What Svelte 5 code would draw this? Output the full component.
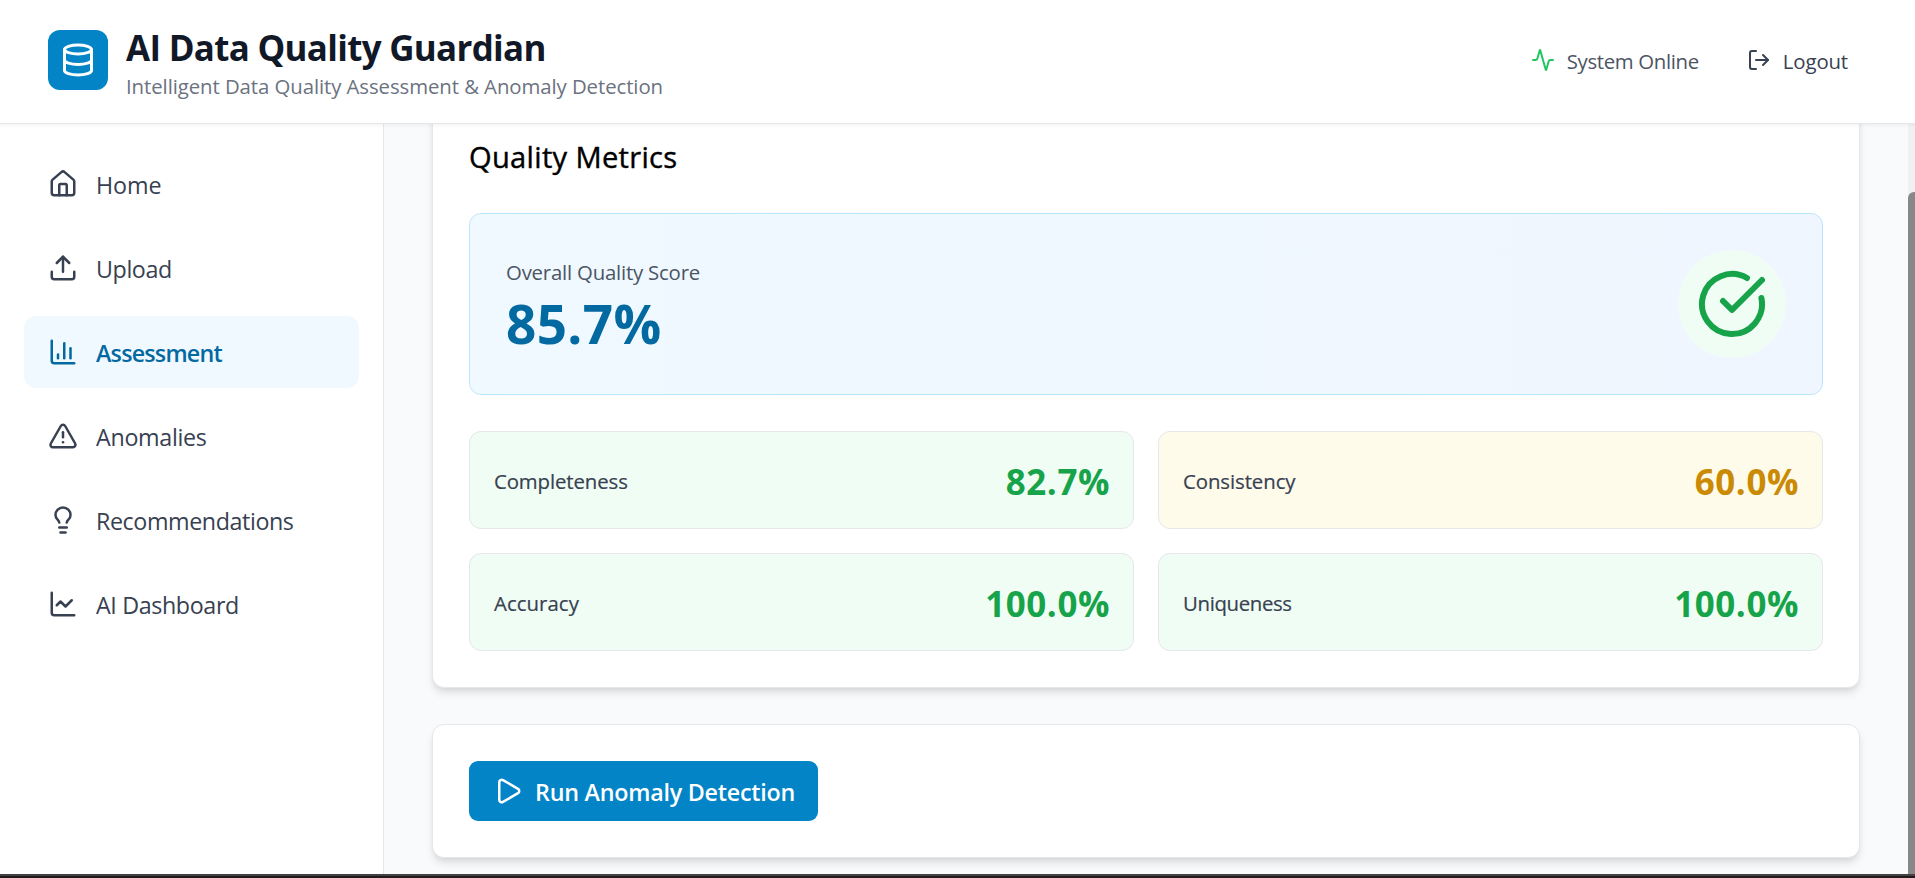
<script>
  const icons = {
    database: '<ellipse cx="12" cy="5" rx="9" ry="3"/><path d="M3 5V19A9 3 0 0 0 21 19V5"/><path d="M3 12A9 3 0 0 0 21 12"/>',
    activity: '<path d="M22 12h-2.48a2 2 0 0 0-1.93 1.46l-2.35 8.36a.25.25 0 0 1-.48 0L9.24 2.18a.25.25 0 0 0-.48 0l-2.35 8.36A2 2 0 0 1 4.49 12H2"/>',
    logout: '<path d="m16 17 5-5-5-5"/><path d="M21 12H9"/><path d="M9 21H5a2 2 0 0 1-2-2V5a2 2 0 0 1 2-2h4"/>',
    home: '<path d="M15 21v-8a1 1 0 0 0-1-1h-4a1 1 0 0 0-1 1v8"/><path d="M3 10a2 2 0 0 1 .709-1.528l7-5.999a2 2 0 0 1 2.582 0l7 5.999A2 2 0 0 1 21 10v9a2 2 0 0 1-2 2H5a2 2 0 0 1-2-2z"/>',
    upload: '<path d="M12 3v12"/><path d="m17 8-5-5-5 5"/><path d="M21 15v4a2 2 0 0 1-2 2H5a2 2 0 0 1-2-2v-4"/>',
    bars: '<path d="M3 3v16a2 2 0 0 0 2 2h16"/><path d="M18 17V9"/><path d="M13 17V5"/><path d="M8 17v-3"/>',
    alert: '<path d="m21.73 18-8-14a2 2 0 0 0-3.48 0l-8 14A2 2 0 0 0 4 21h16a2 2 0 0 0 1.73-3"/><path d="M12 9v4"/><path d="M12 17h.01"/>',
    bulb: '<path d="M15 14c.2-1 .7-1.7 1.5-2.5 1-.9 1.5-2.2 1.5-3.5A6 6 0 0 0 6 8c0 1 .2 2.2 1.5 3.5.7.7 1.3 1.5 1.5 2.5"/><path d="M9 18h6"/><path d="M10 22h4"/>',
    line: '<path d="M3 3v16a2 2 0 0 0 2 2h16"/><path d="m19 9-5 5-4-4-3 3"/>',
    check: '<path d="M21.801 10A10 10 0 1 1 17 3.335"/><path d="m9 11 3 3L22 4"/>',
    play: '<path d="M5 5a2 2 0 0 1 3.008-1.728l11.997 6.998a2 2 0 0 1 .003 3.458l-12 7A2 2 0 0 1 5 19z"/>'
  };

  const nav = [
    { label: 'Home', icon: 'home', spacing: -0.1 },
    { label: 'Upload', icon: 'upload', spacing: -0.4 },
    { label: 'Assessment', icon: 'bars', spacing: -0.78, active: true },
    { label: 'Anomalies', icon: 'alert', spacing: -0.3 },
    { label: 'Recommendations', icon: 'bulb', spacing: -0.41 },
    { label: 'AI Dashboard', icon: 'line', spacing: -0.37 }
  ];

  const metrics = [
    { label: 'Completeness', value: '82.7%', tone: 'good', spacing: -0.1 },
    { label: 'Consistency', value: '60.0%', tone: 'warn', spacing: -0.07 },
    { label: 'Accuracy', value: '100.0%', tone: 'good', spacing: 0.06 },
    { label: 'Uniqueness', value: '100.0%', tone: 'good', spacing: -0.35 }
  ];
</script>

{#snippet icon(name, cls)}
  <svg class="icon {cls}" viewBox="0 0 24 24" aria-hidden="true">{@html icons[name]}</svg>
{/snippet}

<div class="app">
  <header class="topbar">
    <div class="brand">
      <div class="logo">{@render icon('database', 'i36')}</div>
      <div class="brand-text">
        <h1>AI Data Quality Guardian</h1>
        <p>Intelligent Data Quality Assessment &amp; Anomaly Detection</p>
      </div>
    </div>
    <div class="actions">
      <div class="status">{@render icon('activity', 'i24 online')}<span>System Online</span></div>
      <button class="logout">{@render icon('logout', 'i24')}<span>Logout</span></button>
    </div>
  </header>

  <div class="body">
    <nav class="sidebar">
      {#each nav as item}
        <button class="nav-item" class:active={item.active}>
          {@render icon(item.icon, 'i30')}
          <span style="letter-spacing: {item.spacing}px">{item.label}</span>
        </button>
      {/each}
    </nav>

    <main>
      <section class="card first">
        <h2>Quality Metrics</h2>
        <div class="score">
          <div class="score-text">
            <p class="score-label">Overall Quality Score</p>
            <p class="score-value">85.7%</p>
          </div>
          <div class="badge">{@render icon('check', 'i72')}</div>
        </div>
        <div class="grid">
          {#each metrics as m}
            <div class="metric {m.tone}">
              <span class="m-label" style="letter-spacing: {m.spacing}px">{m.label}</span>
              <span class="m-value">{m.value}</span>
            </div>
          {/each}
        </div>
      </section>

      <section class="card">
        <button class="run">{@render icon('play', 'i30')}<span>Run Anomaly Detection</span></button>
      </section>
    </main>

    <div class="scrollbar"><div class="thumb"></div></div>
  </div>
  <div class="edge"></div>
</div>

<style>
  :global(body) {
    margin: 0;
    overflow: hidden;
  }
  .app {
    width: 1915px;
    height: 878px;
    display: flex;
    flex-direction: column;
    overflow: hidden;
    background: #f8fafc;
    font-family: 'Open Sans', 'Noto Sans', sans-serif;
  }
  .app *, .app {
    box-sizing: border-box;
  }
  h1, h2, p {
    margin: 0;
  }
  button {
    font-family: inherit;
    border: 0;
    background: none;
    padding: 0;
    margin: 0;
  }
  .icon {
    display: block;
    flex: none;
    fill: none;
    stroke: currentColor;
    stroke-width: 2;
    stroke-linecap: round;
    stroke-linejoin: round;
  }
  .i24 { width: 24px; height: 24px; }
  .i30 { width: 30px; height: 30px; }
  .i36 { width: 36px; height: 36px; }
  .i72 { width: 72px; height: 72px; }

  .topbar {
    flex: none;
    height: 124px;
    padding: 0 48px 3px;
    display: flex;
    align-items: center;
    justify-content: space-between;
    background: #fff;
    border-bottom: 1px solid #e5e7eb;
    box-shadow: 0 1.5px 3px rgb(0 0 0 / 0.05);
    position: relative;
    z-index: 1;
  }
  .brand {
    display: flex;
    align-items: center;
    gap: 18px;
  }
  .logo {
    width: 60px;
    height: 60px;
    display: grid;
    place-items: center;
    border-radius: 12px;
    background: #0284c7;
    color: #fff;
  }
  .brand-text {
    padding-top: 5px;
    white-space: nowrap;
  }
  h1 {
    font-size: 34.92px;
    line-height: 46px;
    font-weight: 700;
    letter-spacing: -0.68px;
    color: #111827;
  }
  .brand-text p {
    font-size: 20.37px;
    line-height: 30px;
    letter-spacing: -0.075px;
    color: #6b7280;
  }
  .actions {
    display: flex;
    align-items: center;
    gap: 48px;
    padding-right: 19px;
    font-size: 20.37px;
    line-height: 30px;
  }
  .status, .logout {
    display: flex;
    align-items: center;
    gap: 12px;
    color: #4b5563;
    font-size: inherit;
    line-height: inherit;
  }
  .status span, .logout span {
    padding-top: 2px;
    letter-spacing: -0.33px;
  }
  .logout {
    color: #374151;
  }
  .logout span {
    letter-spacing: -0.13px;
  }
  .status .icon {
    color: #22c55e;
  }

  .body {
    flex: 1;
    min-height: 0;
    display: flex;
  }
  .sidebar {
    flex: none;
    width: 384px;
    padding: 24px;
    display: flex;
    flex-direction: column;
    gap: 12px;
    background: #fff;
    border-right: 1px solid #e5e7eb;
  }
  .nav-item {
    height: 72px;
    flex: none;
    padding: 0 24px;
    display: flex;
    align-items: center;
    gap: 18px;
    border-radius: 12px;
    font-size: 23.28px;
    line-height: 36px;
    color: #374151;
  }
  .nav-item span {
    padding-top: 2px;
  }
  .nav-item.active {
    background: #f0f9ff;
    color: #0369a1;
    font-weight: 600;
  }

  main {
    flex: 1;
    padding: 0 48px;
    overflow: hidden;
    display: flex;
    flex-direction: column;
    gap: 36px;
  }
  .card {
    flex: none;
    padding: 36px;
    background: #fff;
    border: 1px solid #e5e7eb;
    border-radius: 12px;
    box-shadow: 0 6px 9px -1.5px rgb(0 0 0 / 0.1), 0 3px 6px -3px rgb(0 0 0 / 0.1);
  }
  .first {
    margin-top: -26px;
  }
  h2 {
    margin-bottom: 33px;
    font-size: 29.1px;
    line-height: 45px;
    font-weight: 500;
    letter-spacing: 0.32px;
    -webkit-text-stroke: 0.4px currentColor;
    color: #000;
  }
  .score {
    height: 182px;
    padding: 0 36px;
    display: flex;
    align-items: center;
    justify-content: space-between;
    border: 1px solid #bae6fd;
    border-radius: 12px;
    background: linear-gradient(to right, #f0f9ff, #eff6ff);
  }
  .score-label {
    font-size: 20.37px;
    line-height: 30px;
    letter-spacing: -0.2px;
    color: #4b5563;
  }
  .score-value {
    margin: 7px 0 -3px;
    font-size: 53px;
    line-height: 60px;
    font-weight: 700;
    letter-spacing: 0.35px;
    color: #0369a1;
  }
  .badge {
    width: 108px;
    height: 108px;
    display: grid;
    place-items: center;
    border-radius: 50%;
    background: #f0fdf4;
    color: #16a34a;
  }
  .grid {
    margin-top: 36px;
    display: grid;
    grid-template-columns: 1fr 1fr;
    gap: 24px;
  }
  .metric {
    height: 98px;
    padding: 0 24px;
    display: flex;
    align-items: center;
    justify-content: space-between;
    border: 1px solid #e5e7eb;
    border-radius: 12px;
  }
  .good {
    background: #f0fdf4;
  }
  .warn {
    background: #fffbeb;
  }
  .m-label {
    padding-top: 2px;
    font-size: 20.37px;
    line-height: 30px;
    font-weight: 500;
    -webkit-text-stroke: 0.2px currentColor;
    color: #374151;
  }
  .m-value {
    margin-right: -1px;
    padding-top: 3px;
    font-size: 34.92px;
    line-height: 48px;
    font-weight: 700;
    letter-spacing: 0.6px;
    color: #16a34a;
  }
  .warn .m-value {
    color: #ca8a04;
  }
  .run {
    width: 349px;
    height: 60px;
    padding-left: 24px;
    display: flex;
    align-items: center;
    gap: 12px;
    border-radius: 9px;
    background: #0284c7;
    color: #fff;
    font-size: 23.28px;
    line-height: 36px;
    font-weight: 600;
    letter-spacing: -0.23px;
    white-space: nowrap;
  }
  .run span {
    padding-top: 2px;
  }

  .scrollbar {
    flex: none;
    width: 7px;
    padding-top: 68px;
    display: flex;
    background: #f1f1f1;
  }
  .thumb {
    flex: 1;
    border-top-left-radius: 6px;
    background: #888;
  }
  .edge {
    flex: none;
    height: 4px;
    border-top: 2px solid #444142;
    background: #231a1d;
  }
</style>
